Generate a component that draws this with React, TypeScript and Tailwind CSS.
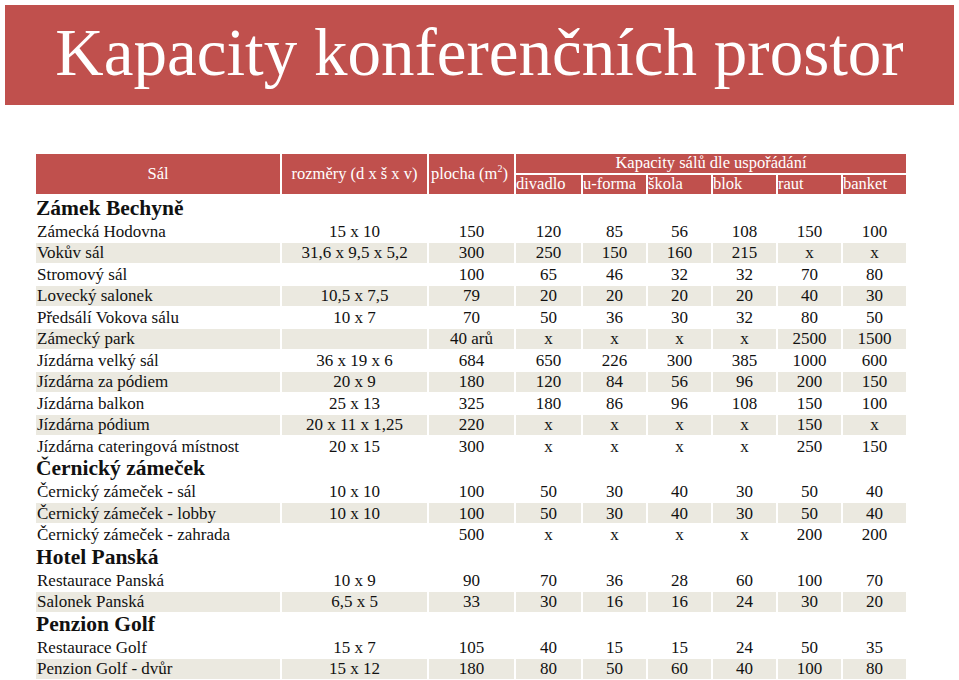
const COLS = "grid grid-cols-[244px_145px_85px_65px_63px_63px_63px_63px_63px] gap-x-[2px]";

type Row =
  | { h: string }
  | { name: string; dim: string; area: string; cap: string[]; shade?: boolean };

const rows: Row[] = [
  { h: "Zámek Bechyně" },
  { name: "Zámecká Hodovna", dim: "15 x 10", area: "150", cap: ["120", "85", "56", "108", "150", "100"] },
  { name: "Vokův sál", dim: "31,6 x 9,5 x 5,2", area: "300", cap: ["250", "150", "160", "215", "x", "x"], shade: true },
  { name: "Stromový sál", dim: "", area: "100", cap: ["65", "46", "32", "32", "70", "80"] },
  { name: "Lovecký salonek", dim: "10,5 x 7,5", area: "79", cap: ["20", "20", "20", "20", "40", "30"], shade: true },
  { name: "Předsálí Vokova sálu", dim: "10 x 7", area: "70", cap: ["50", "36", "30", "32", "80", "50"] },
  { name: "Zámecký park", dim: "", area: "40 arů", cap: ["x", "x", "x", "x", "2500", "1500"], shade: true },
  { name: "Jízdárna velký sál", dim: "36 x 19 x 6", area: "684", cap: ["650", "226", "300", "385", "1000", "600"] },
  { name: "Jízdárna za pódiem", dim: "20 x 9", area: "180", cap: ["120", "84", "56", "96", "200", "150"], shade: true },
  { name: "Jízdárna balkon", dim: "25 x 13", area: "325", cap: ["180", "86", "96", "108", "150", "100"] },
  { name: "Jízdárna pódium", dim: "20 x 11 x 1,25", area: "220", cap: ["x", "x", "x", "x", "150", "x"], shade: true },
  { name: "Jízdárna cateringová místnost", dim: "20 x 15", area: "300", cap: ["x", "x", "x", "x", "250", "150"] },
  { h: "Černický zámeček" },
  { name: "Černický zámeček - sál", dim: "10 x 10", area: "100", cap: ["50", "30", "40", "30", "50", "40"] },
  { name: "Černický zámeček - lobby", dim: "10 x 10", area: "100", cap: ["50", "30", "40", "30", "50", "40"], shade: true },
  { name: "Černický zámeček - zahrada", dim: "", area: "500", cap: ["x", "x", "x", "x", "200", "200"] },
  { h: "Hotel Panská" },
  { name: "Restaurace Panská", dim: "10 x 9", area: "90", cap: ["70", "36", "28", "60", "100", "70"] },
  { name: "Salonek Panská", dim: "6,5 x 5", area: "33", cap: ["30", "16", "16", "24", "30", "20"], shade: true },
  { h: "Penzion Golf" },
  { name: "Restaurace Golf", dim: "15 x 7", area: "105", cap: ["40", "15", "15", "24", "50", "35"] },
  { name: "Penzion Golf - dvůr", dim: "15 x 12", area: "180", cap: ["80", "50", "60", "40", "100", "80"], shade: true },
];

const serif = "font-['Liberation_Serif',serif]";

export default function App() {
  return (
    <div className={`w-[959px] h-[680px] overflow-hidden bg-white text-[#111] ${serif}`}>
      {/* Title banner */}
      <div className="mx-[5px] mt-[5px] h-[100px] bg-[#c0504d] flex items-center justify-center">
        <h1 className="text-white text-[67px] leading-none pb-[6px]">Kapacity konferenčních prostor</h1>
      </div>

      <div className="ml-[36px] mt-[49px] w-[870px]">
        {/* Header */}
        <div className={`${COLS} grid-rows-[19px_19px] gap-y-[2px] text-white text-[16.5px] leading-none`}>
          <div className="row-span-2 bg-[#c0504d] flex items-center justify-center">Sál</div>
          <div className="row-span-2 bg-[#c0504d] flex items-center justify-center">rozměry (d x š x v)</div>
          <div className="row-span-2 bg-[#c0504d] flex items-center pl-[2px] whitespace-nowrap">
            plocha (m<sup className="text-[10px]">2</sup>)
          </div>
          <div className="col-span-6 bg-[#c0504d] flex items-center justify-center">Kapacity sálů dle uspořádání</div>
          {["divadlo", "u-forma", "škola", "blok", "raut", "banket"].map((t) => (
            <div key={t} className="bg-[#c0504d] flex items-center">{t}</div>
          ))}
        </div>

        {/* Body */}
        <div className="mt-[2px]">
          {rows.map((r, i) =>
            "h" in r ? (
              <div
                key={i}
                className={`h-[24px] flex items-center font-bold text-[21.5px] leading-none ${i === 0 ? "mt-[2.5px]" : ""}`}
              >
                {r.h}
              </div>
            ) : (
              <div key={i} className={`${COLS} h-[21.5px] py-[0.75px] text-[17px] leading-none`}>
                {[r.name, r.dim, r.area, ...r.cap].map((c, j) => (
                  <div
                    key={j}
                    className={`flex items-center whitespace-nowrap ${j === 0 ? "pl-[1px]" : "justify-center"} ${
                      r.shade ? "bg-[#ebe9e0]" : ""
                    }`}
                  >
                    {c}
                  </div>
                ))}
              </div>
            )
          )}
        </div>
      </div>
    </div>
  );
}
